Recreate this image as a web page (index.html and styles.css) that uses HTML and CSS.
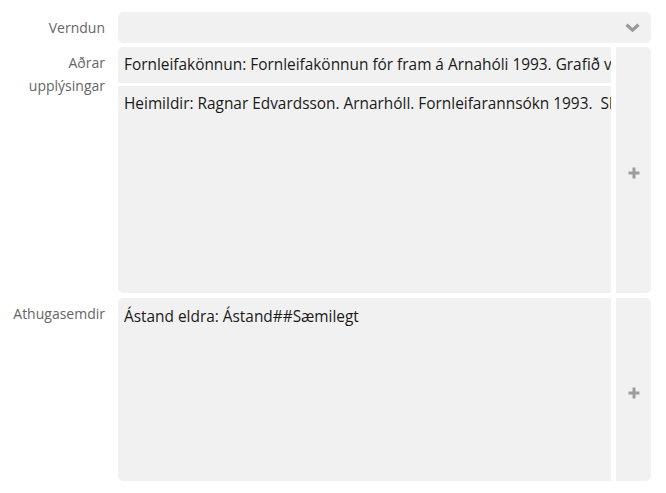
FILE: index.html
```html
<!DOCTYPE html>
<html lang="is">
<head>
<meta charset="utf-8">
<title>Form</title>
<link rel="stylesheet" href="styles.css">
</head>
<body>
<div class="form">
  <div class="row row-select">
    <label class="label">Verndun</label>
    <div class="select">
      <svg class="chevron" width="15" height="10" viewBox="0 0 15 10"><path d="M1.5 1.8 L7.5 7.2 L13.5 1.8" fill="none" stroke="#9a9a9a" stroke-width="3.2"/></svg>
    </div>
  </div>
  <div class="row row-info">
    <label class="label">Aðrar<br>upplýsingar</label>
    <div class="field">
      <div class="boxes">
        <div class="box box-line">Fornleifakönnun: Fornleifakönnun fór fram á Arnahóli 1993. Grafið var niður á minjar</div>
        <div class="box box-fill">Heimildir: Ragnar Edvardsson. Arnarhóll. Fornleifarannsókn 1993.&nbsp; Skýrsla um rannsókn</div>
      </div>
      <div class="add"><svg width="12" height="12" viewBox="0 0 12 12"><path d="M6 0.5V11.5M0.5 6H11.5" stroke="#9d9d9d" stroke-width="3"/></svg></div>
    </div>
  </div>
  <div class="row row-notes">
    <label class="label">Athugasemdir</label>
    <div class="field">
      <div class="boxes">
        <div class="box box-fill box-single">Ástand eldra: Ástand##Sæmilegt</div>
      </div>
      <div class="add"><svg width="12" height="12" viewBox="0 0 12 12"><path d="M6 0.5V11.5M0.5 6H11.5" stroke="#9d9d9d" stroke-width="3"/></svg></div>
    </div>
  </div>
</div>
</body>
</html>
```

FILE: styles.css
```css
html, body {
  margin: 0;
  padding: 0;
  background: #fff;
}
body {
  font-family: "Open Sans", "Noto Sans", sans-serif;
  font-size: 14px;
  color: #1a1a1a;
}
.form {
  padding: 12px 15px 0 0;
  display: flex;
  flex-direction: column;
}
.row {
  display: grid;
  grid-template-columns: 105px minmax(0, 1fr);
  column-gap: 13px;
}
.row-select { height: 31px; }
.row-info { height: 246px; margin-top: 4px; }
.row-notes { height: 183px; margin-top: 5px; }
.label {
  text-align: right;
  color: #666;
  line-height: 23px;
  padding-top: 4px;
}
.select {
  background: #f1f1f1;
  border-radius: 5px;
  display: flex;
  align-items: center;
  justify-content: flex-end;
  padding-right: 11px;
}
.chevron { display: block; }
.field {
  display: flex;
  gap: 5px;
  min-width: 0;
}
.boxes {
  flex: 1;
  min-width: 0;
  display: flex;
  flex-direction: column;
  gap: 3px;
}
.box {
  background: #f1f1f1;
  white-space: nowrap;
  overflow: hidden;
  padding: 7px 0 0 6px;
  font-size: 15.4px;
  line-height: 22px;
  box-sizing: border-box;
}
.box-line {
  height: 36px;
  border-top-left-radius: 5px;
}
.box-fill {
  flex: 1;
  border-bottom-left-radius: 5px;
  padding-top: 8px;
}
.box-line + .box-fill { padding-top: 7px; }
.box-single {
  border-top-left-radius: 5px;
  padding-top: 8px;
}
.add {
  flex: 0 0 35px;
  background: #f1f1f1;
  border-top-right-radius: 5px;
  border-bottom-right-radius: 5px;
  display: flex;
  align-items: center;
  justify-content: center;
  padding-top: 6px;
  box-sizing: border-box;
}
.add svg { display: block; margin-left: 1px; }
```
